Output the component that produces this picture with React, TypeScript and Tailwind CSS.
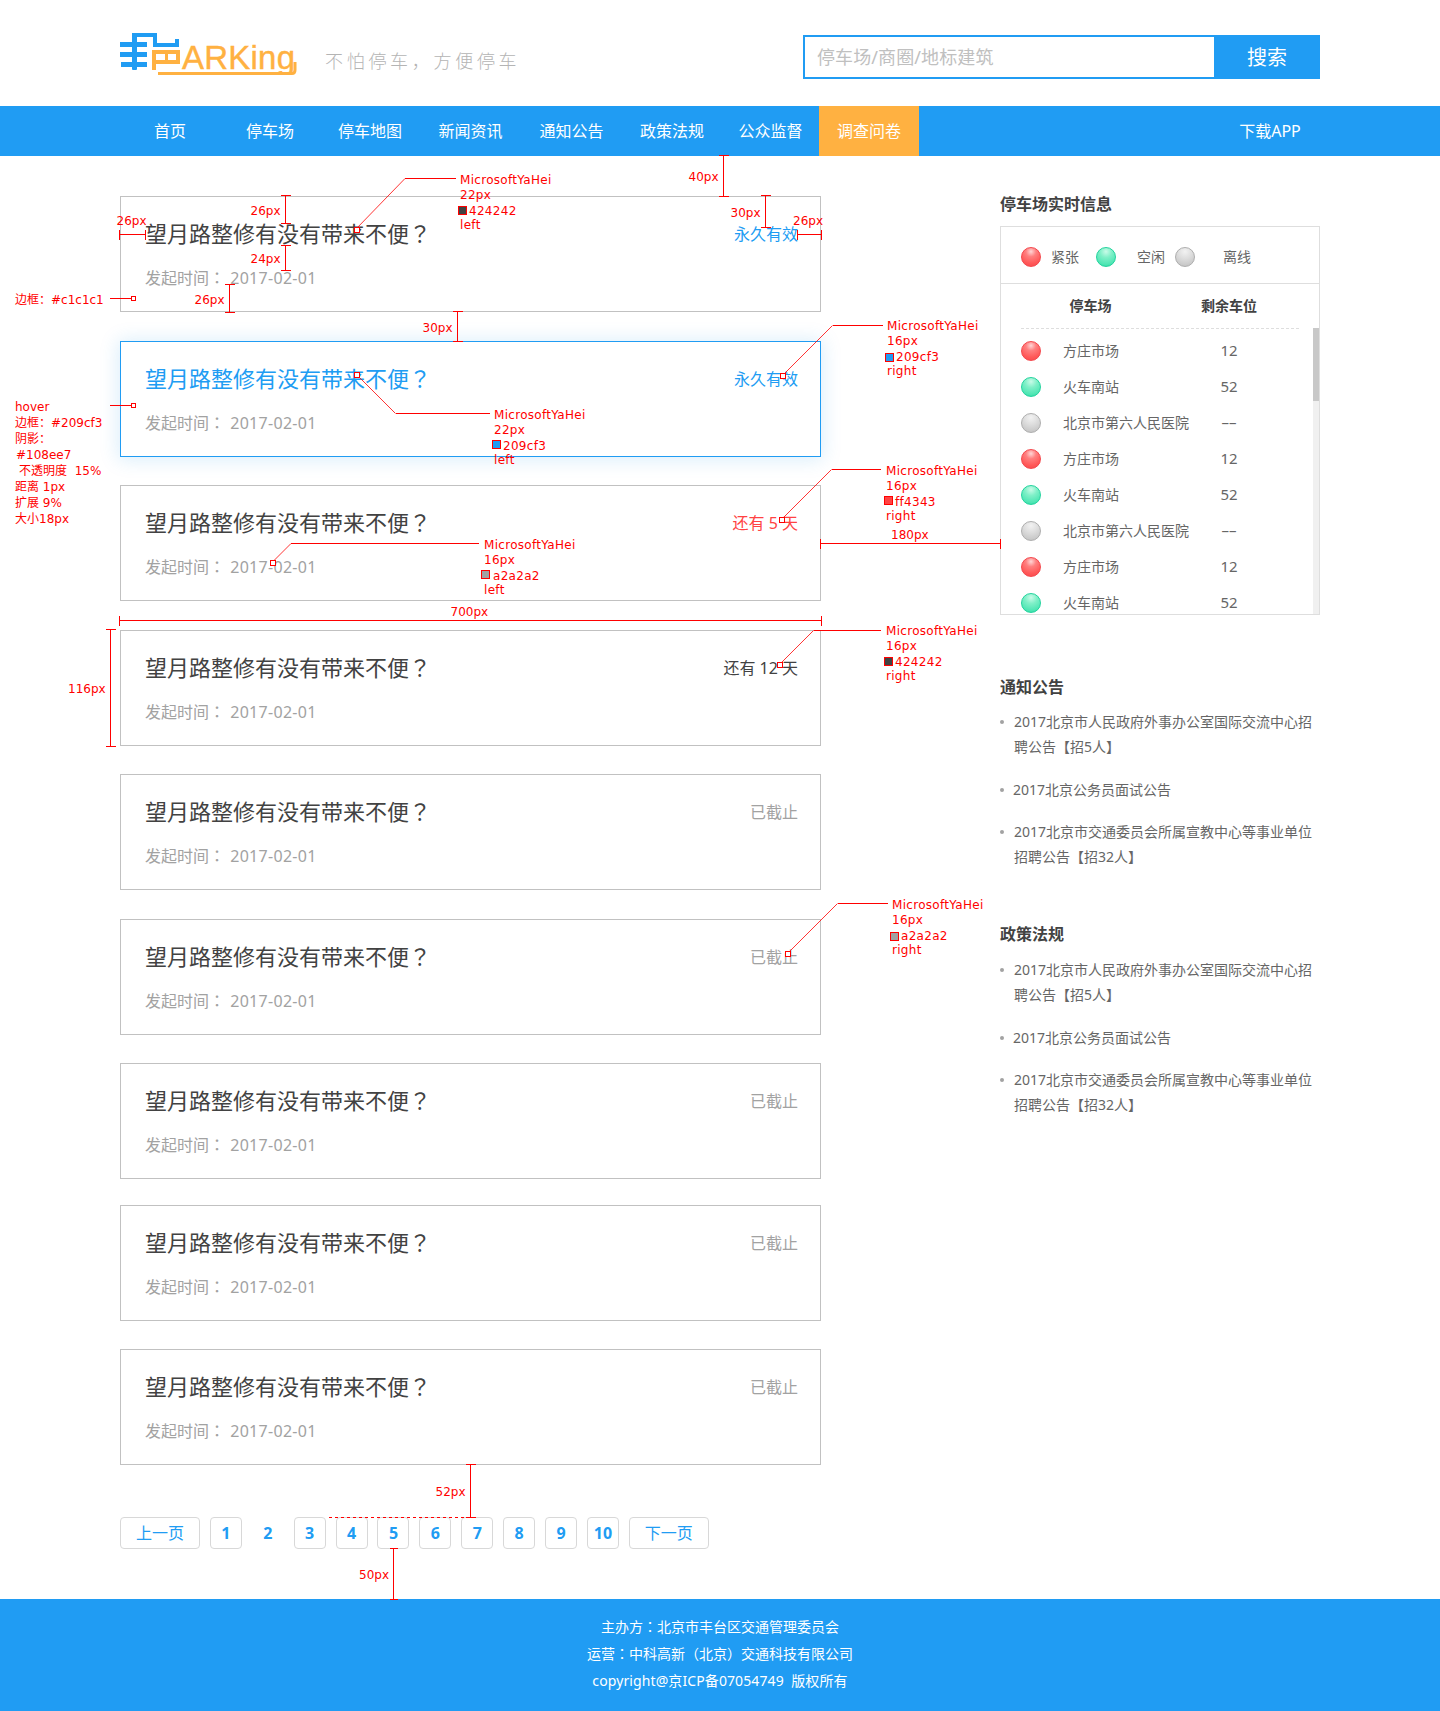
import React from "react";

const navItems: [string, string][] = [
  ["首页", "w-[100px]"],
  ["停车场", "w-[100px]"],
  ["停车地图", "w-[100px]"],
  ["新闻资讯", "w-[101px]"],
  ["通知公告", "w-[101px]"],
  ["政策法规", "w-[100px]"],
  ["公众监督", "w-[97px]"],
];

const gaps = ["mt-0", "mt-[29px]", "mt-[28px]", "mt-[29px]", "mt-[28px]", "mt-[29px]", "mt-[28px]", "mt-[26px]", "mt-[28px]"];

type Card = { side: string; sideCls: string; hover?: boolean };
const cards: Card[] = [
  { side: "永久有效", sideCls: "text-[#209cf3]" },
  { side: "永久有效", sideCls: "text-[#209cf3]", hover: true },
  { side: "还有 5 天", sideCls: "text-[#ff4343]" },
  { side: "还有 12 天", sideCls: "text-[#424242]" },
  { side: "已截止", sideCls: "text-[#a2a2a2]" },
  { side: "已截止", sideCls: "text-[#a2a2a2]" },
  { side: "已截止", sideCls: "text-[#a2a2a2]" },
  { side: "已截止", sideCls: "text-[#a2a2a2]" },
  { side: "已截止", sideCls: "text-[#a2a2a2]" },
];

type Status = "red" | "green" | "grey";
const rows: [Status, string, string][] = [
  ["red", "方庄市场", "12"],
  ["green", "火车南站", "52"],
  ["grey", "北京市第六人民医院", "––"],
  ["red", "方庄市场", "12"],
  ["green", "火车南站", "52"],
  ["grey", "北京市第六人民医院", "––"],
  ["red", "方庄市场", "12"],
  ["green", "火车南站", "52"],
];

const dotCls: Record<Status, string> = {
  red: "border-[#f4474c] bg-[radial-gradient(circle_at_50%_20%,#ffd6d6_0%,#ff8080_30%,#ff5858_70%,#f5474b_100%)]",
  green: "border-[#22d39d] bg-[radial-gradient(circle_at_50%_20%,#c9fbe8_0%,#80f0c8_35%,#4fe6b4_75%,#22d39d_100%)]",
  grey: "border-[#aeaeae] bg-[radial-gradient(circle_at_50%_20%,#f2f2f2_0%,#dedede_40%,#c6c6c6_85%,#b4b4b4_100%)]",
};

function Dot({ s }: { s: Status }) {
  return <span className={"block w-[20px] h-[20px] shrink-0 rounded-full border " + dotCls[s]} />;
}

const Mark = ({ c }: { c: string }) => <span className="font-['Noto_Sans_CJK_TC',sans-serif]">{c}</span>;

function Logo() {
  const blue = "#209cf3";
  const or = "#ffb141";
  return (
    <svg width="190" height="52" viewBox="0 0 190 52" className="shrink-0">
      <g fill={blue}>
        <rect x="0" y="15" width="27" height="5" />
        <rect x="0" y="25" width="27" height="5" />
        <rect x="1" y="35" width="26" height="5" />
        <rect x="12" y="6" width="5" height="37" rx="1" />
        <rect x="12" y="6" width="25" height="4" />
        <rect x="33" y="6" width="4" height="14" />
        <rect x="33" y="16" width="26" height="4" />
        <rect x="55" y="12" width="4" height="8" />
      </g>
      <g fill={or}>
        <rect x="32" y="23" width="28" height="4" />
        <rect x="32" y="23" width="4" height="20" />
        <rect x="36" y="33" width="24" height="4" />
        <rect x="45" y="25" width="3" height="10" />
        <rect x="56" y="23" width="4" height="14" />
      </g>
      <text
        x="62"
        y="42"
        fontFamily="'Liberation Sans',sans-serif"
        fontSize="33"
        fill={or}
        stroke={or}
        strokeWidth="0.4"
        textLength="113"
      >
        ARKing
      </text>
      <rect x="30" y="45" width="146" height="7" fill="#fff" />
      <path d="M38 46.5 H172 Q175 46.5 175 43 V35" fill="none" stroke={or} strokeWidth="3" />
    </svg>
  );
}

function SideList({ top }: { top: string }) {
  return (
    <ul className={top}>
      <li className="relative pl-[14px] leading-[24px] text-[14px] text-[#666]">
        <i className="absolute left-[0px] top-[10px] w-[4px] h-[4px] rounded-full bg-[#a2a2a2]" />
        2017北京市人民政府外事办公室国际交流中心招聘公告<Mark c="【" />招5人<Mark c="】" />
      </li>
      <li className="relative pl-[13px] mt-[19px] leading-[24px] text-[14px] text-[#666]">
        <i className="absolute left-[0px] top-[10px] w-[4px] h-[4px] rounded-full bg-[#a2a2a2]" />
        2017北京公务员面试公告
      </li>
      <li className="relative pl-[14px] mt-[18px] leading-[24px] text-[14px] text-[#666]">
        <i className="absolute left-[0px] top-[10px] w-[4px] h-[4px] rounded-full bg-[#a2a2a2]" />
        2017北京市交通委员会所属宣教中心等事业单位招聘公告<Mark c="【" />招32人<Mark c="】" />
      </li>
    </ul>
  );
}

function Note({ x, y, wide, children }: { x: number; y: number; wide?: boolean; children: React.ReactNode }) {
  return (
    <div
      className={
        "absolute whitespace-pre -translate-y-1/2 text-[12px] leading-[15px] text-[#ff0000] font-['DejaVu_Sans','Noto_Sans_CJK_SC',sans-serif] " +
        (wide ? "tracking-[0.3px]" : "")
      }
      style={{ left: x, top: y }}
    >
      {children}
    </div>
  );
}

function V({ x, a, b, cap = 5 }: { x: number; a: number; b: number; cap?: number }) {
  return (
    <path shapeRendering="crispEdges" d={`M${x} ${a}V${b}M${x - cap} ${a}H${x + cap}M${x - cap} ${b}H${x + cap}`} />
  );
}
function H({ y, a, b, cap = 5 }: { y: number; a: number; b: number; cap?: number }) {
  return (
    <path shapeRendering="crispEdges" d={`M${a} ${y}H${b}M${a} ${y - cap}V${y + cap}M${b} ${y - cap}V${y + cap}`} />
  );
}
function Call({ sx, sy, kx, ky, ex }: { sx: number; sy: number; kx: number; ky: number; ex: number }) {
  return (
    <g>
      <path d={`M${sx} ${sy}L${kx} ${ky}`} strokeWidth="0.8" />
      <path shapeRendering="crispEdges" d={`M${kx} ${ky}H${ex}`} />
      <rect x={sx - 2} y={sy - 2} width="5" height="5" fill="#fff" shapeRendering="crispEdges" />
    </g>
  );
}
function Swatch({ x, y, c }: { x: number; y: number; c: string }) {
  return <rect x={x} y={y} width="8" height="8" fill={c} shapeRendering="crispEdges" />;
}

function CallLabel({ x, y, size, color }: { x: number; y: number; size: string; color: string }) {
  return (
    <>
      <Note x={x} y={y + 0.5} wide>MicrosoftYaHei</Note>
      <Note x={x} y={y + 15.5} wide>{size}</Note>
      <Note x={x + 9} y={y + 31.5} wide>{color}</Note>
      <Note x={x} y={y + 45.5} wide>{x < 600 ? "left" : "right"}</Note>
    </>
  );
}

function Annotations() {
  return (
    <div className="absolute inset-0 pointer-events-none">
      <svg width="1440" height="1711" className="absolute inset-0" fill="none" stroke="#ff0000" strokeWidth="1">
        <V x={285.5} a={195.5} b={223.5} />
        <H y={234.5} a={119.5} b={145.5} />
        <V x={285.5} a={245.5} b={270.5} />
        <path shapeRendering="crispEdges" d="M110 298.5H131" />
        <rect x="131.5" y="296.5" width="4" height="4" fill="#fff" shapeRendering="crispEdges" />
        <V x={229.5} a={284.5} b={312.5} />
        <V x={457.5} a={311.5} b={341.5} />
        <Call sx={356} sy={229} kx={405} ky={178.5} ex={456} />
        <Swatch x={458.5} y={206.5} c="#424242" />
        <V x={723.5} a={155.5} b={196.5} />
        <V x={765.5} a={195.5} b={227.5} />
        <H y={234.5} a={797.5} b={821.5} />
        <Call sx={782.5} sy={375.5} kx={832.5} ky={325.5} ex={883} />
        <Swatch x={885.5} y={353.5} c="#209cf3" />
        <Call sx={356} sy={374} kx={395.5} ky={413.5} ex={490} />
        <Swatch x={492.5} y={440.5} c="#209cf3" />
        <path shapeRendering="crispEdges" d="M110 405.5H131" />
        <rect x="131.5" y="403.5" width="4" height="4" fill="#fff" shapeRendering="crispEdges" />
        <Call sx={272} sy={562.5} kx={291} ky={543.5} ex={479} />
        <Swatch x={481.5} y={570.5} c="#a2a2a2" />
        <Call sx={781.5} sy={519.5} kx={831.5} ky={469.5} ex={881} />
        <Swatch x={884.5} y={496.5} c="#ff4343" />
        <H y={543.5} a={820.5} b={1000.5} />
        <H y={620.5} a={119.5} b={821.5} />
        <V x={110.5} a={629.5} b={746.5} />
        <Call sx={779.5} sy={664.5} kx={813.5} ky={630.5} ex={881} />
        <Swatch x={884.5} y={657.5} c="#424242" />
        <Call sx={787.5} sy={953.5} kx={837.5} ky={903.5} ex={888} />
        <Swatch x={890.5} y={932.5} c="#a2a2a2" />
        <V x={470.5} a={1464.5} b={1517.5} />
        <path shapeRendering="crispEdges" d="M329 1517.5H465" strokeDasharray="3 3" />
        <V x={393.5} a={1548.5} b={1599.5} cap={4} />
      </svg>

      <Note x={250.5} y={211}>26px</Note>
      <Note x={116.5} y={221}>26px</Note>
      <Note x={250.5} y={259}>24px</Note>
      <Note x={15} y={300}>边框：#c1c1c1</Note>
      <Note x={194.5} y={300}>26px</Note>
      <Note x={422.5} y={327.5}>30px</Note>
      <CallLabel x={460} y={179} size="22px" color="424242" />
      <Note x={688.5} y={177}>40px</Note>
      <Note x={730.5} y={213}>30px</Note>
      <Note x={793} y={221}>26px</Note>
      <CallLabel x={887} y={325} size="16px" color="209cf3" />
      <CallLabel x={494} y={414} size="22px" color="209cf3" />
      <Note x={15} y={407}>hover</Note>
      <Note x={15} y={423}>边框：#209cf3</Note>
      <Note x={15} y={439}>阴影：</Note>
      <Note x={16} y={455}>#108ee7</Note>
      <Note x={19} y={471}>不透明度  15%</Note>
      <Note x={15} y={487}>距离 1px</Note>
      <Note x={15} y={503}>扩展 9%</Note>
      <Note x={15} y={519}>大小18px</Note>
      <CallLabel x={484} y={544} size="16px" color="a2a2a2" />
      <CallLabel x={886} y={470} size="16px" color="ff4343" />
      <Note x={891} y={535}>180px</Note>
      <Note x={450.5} y={612}>700px</Note>
      <Note x={68} y={689}>116px</Note>
      <CallLabel x={886} y={630} size="16px" color="424242" />
      <CallLabel x={892} y={904} size="16px" color="a2a2a2" />
      <Note x={435.5} y={1492}>52px</Note>
      <Note x={359} y={1575}>50px</Note>
    </div>
  );
}

export default function App() {
  return (
    <div className="relative w-[1440px] bg-white overflow-hidden font-['Noto_Sans','Noto_Sans_CJK_SC',sans-serif]">
      <header className="w-[1200px] h-[106px] mx-auto flex items-center">
        <Logo />
        <div className="ml-[15px] pt-[14px] text-[18px] tracking-[3.7px] text-[#b4b4b4] whitespace-nowrap font-light font-['Noto_Sans_CJK_JP',sans-serif]">
          不怕停车，方便停车
        </div>
        <div className="ml-auto mt-[8px] w-[517px] h-[44px] flex border-2 border-[#209cf3]">
          <div className="flex-1 pl-[12px] text-[18px] leading-[40px] tracking-[0.1px] text-[#c0c0c0]">停车场/商圈/地标建筑</div>
          <div className="w-[106px] -mr-[2px] -my-[2px] bg-[#209cf3] text-white text-[20px] leading-[45px] text-center">搜索</div>
        </div>
      </header>

      <nav className="h-[50px] bg-[#209cf3]">
        <div className="w-[1200px] mx-auto flex text-[16px] leading-[50px] text-white">
          {navItems.map(([n, w]) => (
            <div key={n} className={w + " text-center"}>{n}</div>
          ))}
          <div className="w-[100px] text-center bg-[#ffb141]">调查问卷</div>
          <div className="ml-auto w-[100px] text-center">下载APP</div>
        </div>
      </nav>

      <main className="w-[1200px] mx-auto flex">
        <section className="w-[701px] pt-[40px] shrink-0">
          {cards.map((c, i) => (
            <div
              key={i}
              className={
                gaps[i] +
                " h-[116px] pl-[24px] pr-[22px] pt-[22px] border " +
                (c.hover
                  ? "border-[#209cf3] shadow-[0_1px_18px_2px_rgba(16,142,231,0.15)]"
                  : "border-[#c1c1c1]")
              }
            >
              <div className="flex justify-between items-start h-[30px]">
                <div className={"text-[22px] leading-[26px] " + (c.hover ? "text-[#209cf3]" : "text-[#424242]")}>
                  望月路整修有没有带来不便<Mark c="？" />
                </div>
                <div className={"text-[16px] leading-[30px] " + c.sideCls}>{c.side}</div>
              </div>
              <div className="mt-[16px] text-[16px] leading-[24px] text-[#a2a2a2]">
                发起时间<Mark c="：" /> <span className="ml-[1px] tracking-[0.3px]">2017-02-01</span>
              </div>
            </div>
          ))}

          <div className="mt-[52px] flex gap-[9.9px] text-[#209cf3] text-[16px] leading-[30px] text-center">
            <div className="w-[80px] h-[32px] border border-[#d8d8d8] rounded-[4px]">上一页</div>
            {["1", "2", "3", "4", "5", "6", "7", "8", "9", "10"].map((p) => (
              <div
                key={p}
                className={
                  "w-[32px] h-[32px] border rounded-[4px] font-bold " +
                  (p === "2" ? "border-transparent" : "border-[#d8d8d8]")
                }
              >
                {p}
              </div>
            ))}
            <div className="w-[80px] h-[32px] border border-[#d8d8d8] rounded-[4px]">下一页</div>
          </div>
        </section>

        <aside className="ml-[179px] w-[320px] pt-[36px]">
          <h2 className="text-[16px] leading-[24px] font-bold text-[#424242]">停车场实时信息</h2>
          <div className="mt-[10px] h-[389px] border border-[#dedede] overflow-hidden flex flex-col">
            <div className="h-[57px] shrink-0 pl-[20px] pt-[3px] flex items-center text-[14px] text-[#666] border-b border-[#dedede]">
              <Dot s="red" />
              <span className="ml-[10px]">紧张</span>
              <span className="ml-[17px]"><Dot s="green" /></span>
              <span className="ml-[21px]">空闲</span>
              <span className="ml-[10px]"><Dot s="grey" /></span>
              <span className="ml-[28px]">离线</span>
            </div>
            <div className="h-[44px] shrink-0 pl-[20px] pb-[2px] flex items-center text-[14px] font-bold text-[#424242]">
              <div className="w-[139px] text-center">停车场</div>
              <div className="ml-[29px] w-[80px] text-center">剩余车位</div>
            </div>
            <div className="flex-1 flex min-h-0">
              <div className="flex-1 ml-[20px] mr-[14px] border-t border-dashed border-[#dedede] pt-[4px]">
                {rows.map(([s, name, n], i) => (
                  <div key={i} className="h-[36px] flex items-center text-[#666]">
                    <Dot s={s} />
                    <div className="ml-[22px] w-[146px] -mt-[2px] text-[14px]">{name}</div>
                    <div className="w-[40px] -mt-[1px] text-center text-[15px]">{n}</div>
                  </div>
                ))}
              </div>
              <div className="w-[6px] shrink-0 bg-[#f0f0f0]">
                <div className="h-[73px] bg-[#c8c8c8]" />
              </div>
            </div>
          </div>

          <h2 className="mt-[60px] text-[16px] leading-[24px] font-bold text-[#424242]">通知公告</h2>
          <SideList top="mt-[11px]" />
          <h2 className="mt-[53px] text-[16px] leading-[24px] font-bold text-[#424242]">政策法规</h2>
          <SideList top="mt-[12px]" />
        </aside>
      </main>

      <footer className="mt-[50px] h-[112px] pt-[14px] bg-[#209cf3] text-white text-center text-[14px] leading-[27px]">
        <div>主办方<Mark c="：" />北京市丰台区交通管理委员会</div>
        <div>运营<Mark c="：" />中科高新<Mark c="（" />北京<Mark c="）" />交通科技有限公司</div>
        <div className="tracking-[0.1px]">copyright@京ICP备07054749&nbsp;&nbsp;版权所有</div>
      </footer>

      <Annotations />
    </div>
  );
}
